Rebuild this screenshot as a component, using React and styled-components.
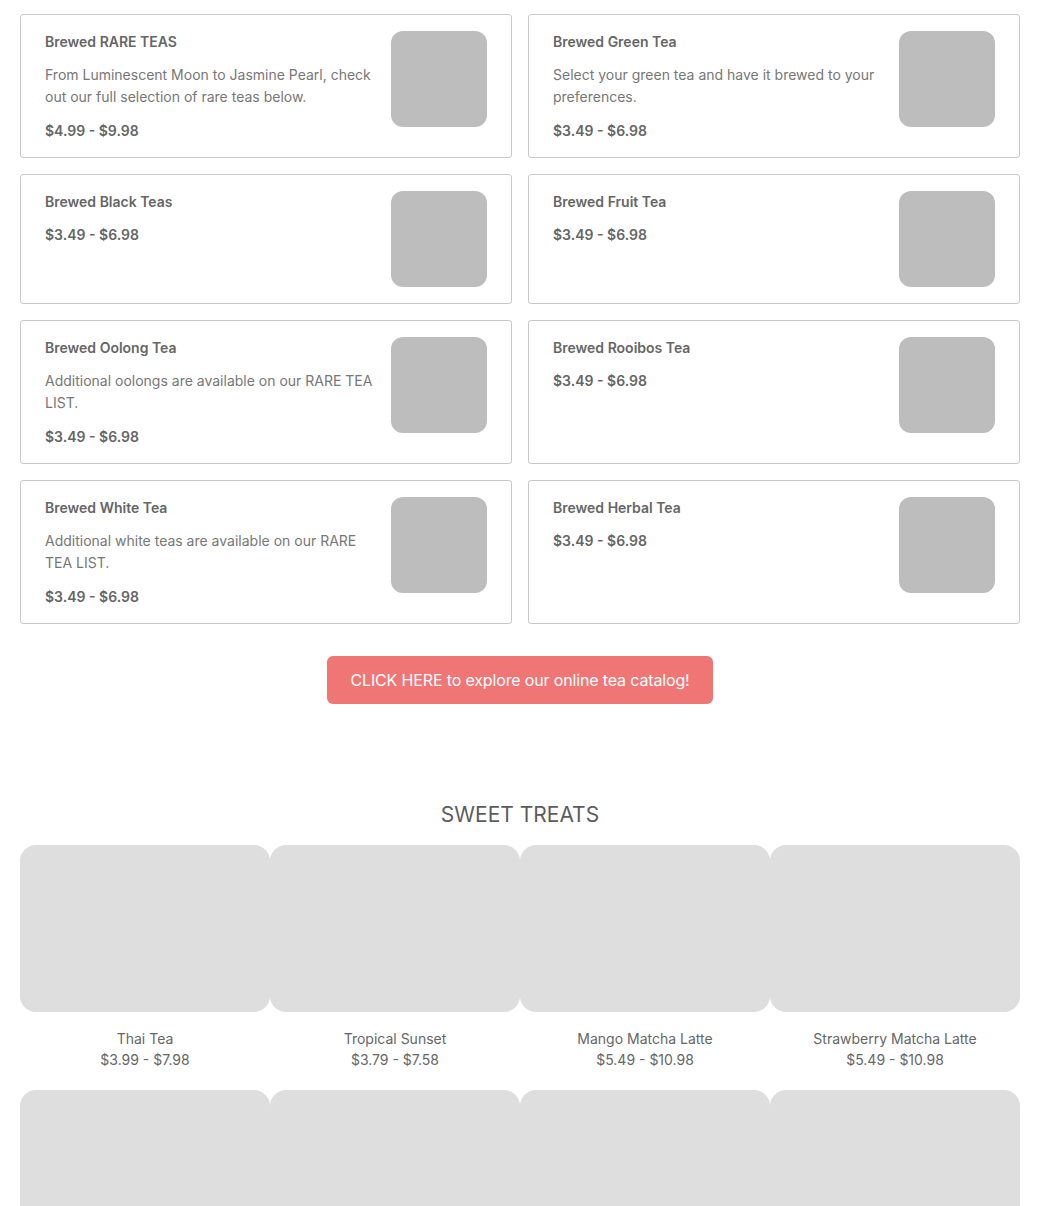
import React from 'react'
import styled, { createGlobalStyle } from 'styled-components'

const GlobalStyle = createGlobalStyle`
  body {
    margin: 0;
    background: #fff;
    font-family: Inter, "Noto Sans", sans-serif;
    color: #666;
  }
`

const teas = [
  { title: 'Brewed RARE TEAS', desc: 'From Luminescent Moon to Jasmine Pearl, check out our full selection of rare teas below.', price: '$4.99 - $9.98' },
  { title: 'Brewed Green Tea', desc: 'Select your green tea and have it brewed to your preferences.', price: '$3.49 - $6.98' },
  { title: 'Brewed Black Teas', price: '$3.49 - $6.98' },
  { title: 'Brewed Fruit Tea', price: '$3.49 - $6.98' },
  { title: 'Brewed Oolong Tea', desc: 'Additional oolongs are available on our RARE TEA LIST.', price: '$3.49 - $6.98' },
  { title: 'Brewed Rooibos Tea', price: '$3.49 - $6.98' },
  { title: 'Brewed White Tea', desc: 'Additional white teas are available on our RARE TEA LIST.', price: '$3.49 - $6.98' },
  { title: 'Brewed Herbal Tea', price: '$3.49 - $6.98' },
]

const treats = [
  { name: 'Thai Tea', price: '$3.99 - $7.98' },
  { name: 'Tropical Sunset', price: '$3.79 - $7.58' },
  { name: 'Mango Matcha Latte', price: '$5.49 - $10.98' },
  { name: 'Strawberry Matcha Latte', price: '$5.49 - $10.98' },
  { name: '', price: '' },
  { name: '', price: '' },
  { name: '', price: '' },
  { name: '', price: '' },
]

const App = () => {
  return (
    <Page>
      <GlobalStyle />
      <TeaGrid>
        {teas.map((t) => (
          <TeaCard key={t.title}>
            <TeaText>
              <TeaTitle>{t.title}</TeaTitle>
              {t.desc && <TeaDesc>{t.desc}</TeaDesc>}
              <TeaPrice>{t.price}</TeaPrice>
            </TeaText>
            <TeaThumb />
          </TeaCard>
        ))}
      </TeaGrid>

      <ButtonRow>
        <CatalogButton>CLICK HERE to explore our online tea catalog!</CatalogButton>
      </ButtonRow>

      <SectionTitle>SWEET TREATS</SectionTitle>
      <TreatGrid>
        {treats.map((t, i) => (
          <Treat key={i}>
            <TreatImage />
            {t.name && <TreatName>{t.name}</TreatName>}
            {t.price && <TreatPrice>{t.price}</TreatPrice>}
          </Treat>
        ))}
      </TreatGrid>
    </Page>
  )
}

export default App

const Page = styled.div`
  padding: 14px 20px 40px;
`

const TeaGrid = styled.div`
  display: grid;
  grid-template-columns: 1fr 1fr;
  gap: 16px;
`

const TeaCard = styled.div`
  display: flex;
  align-items: flex-start;
  gap: 12px;
  border: 1px solid #c9c9c9;
  border-radius: 3px;
  padding: 16px 24px;
`

const TeaText = styled.div`
  flex: 1;
  display: flex;
  flex-direction: column;
  padding-top: 1px;
`

const TeaTitle = styled.div`
  font-size: 14px;
  font-weight: 600;
  line-height: 20px;
  color: #666;
`

const TeaDesc = styled.div`
  margin-top: 12px;
  font-size: 14px;
  line-height: 22px;
  color: #777;
`

const TeaPrice = styled.div`
  margin-top: 13px;
  font-size: 14px;
  font-weight: 600;
  line-height: 20px;
  color: #666;
`

const TeaThumb = styled.div`
  width: 96px;
  height: 96px;
  flex-shrink: 0;
  border-radius: 12px;
  background: #bdbdbd;
`

const ButtonRow = styled.div`
  display: flex;
  justify-content: center;
  margin-top: 32px;
`

const CatalogButton = styled.button`
  height: 48px;
  padding: 0 23px;
  border: none;
  border-radius: 6px;
  background: #f07575;
  color: #fff;
  font-family: Inter, sans-serif;
  font-size: 16px;
  letter-spacing: -0.15px;
`

const SectionTitle = styled.h2`
  margin: 97px 0 16px;
  text-align: center;
  font-size: 21px;
  font-weight: 400;
  line-height: 28px;
  color: #5c5c5c;
`

const TreatGrid = styled.div`
  display: grid;
  grid-template-columns: repeat(4, 1fr);
  row-gap: 20px;
`

const Treat = styled.div`
  display: flex;
  flex-direction: column;
  align-items: center;
  text-align: center;
`

const TreatImage = styled.div`
  width: 100%;
  height: 167px;
  border-radius: 16px;
  background: #dedede;
  margin-bottom: 16px;
`

const TreatName = styled.div`
  font-size: 14px;
  line-height: 21px;
  color: #666;
`

const TreatPrice = styled.div`
  font-size: 14px;
  line-height: 21px;
  color: #666;
`
